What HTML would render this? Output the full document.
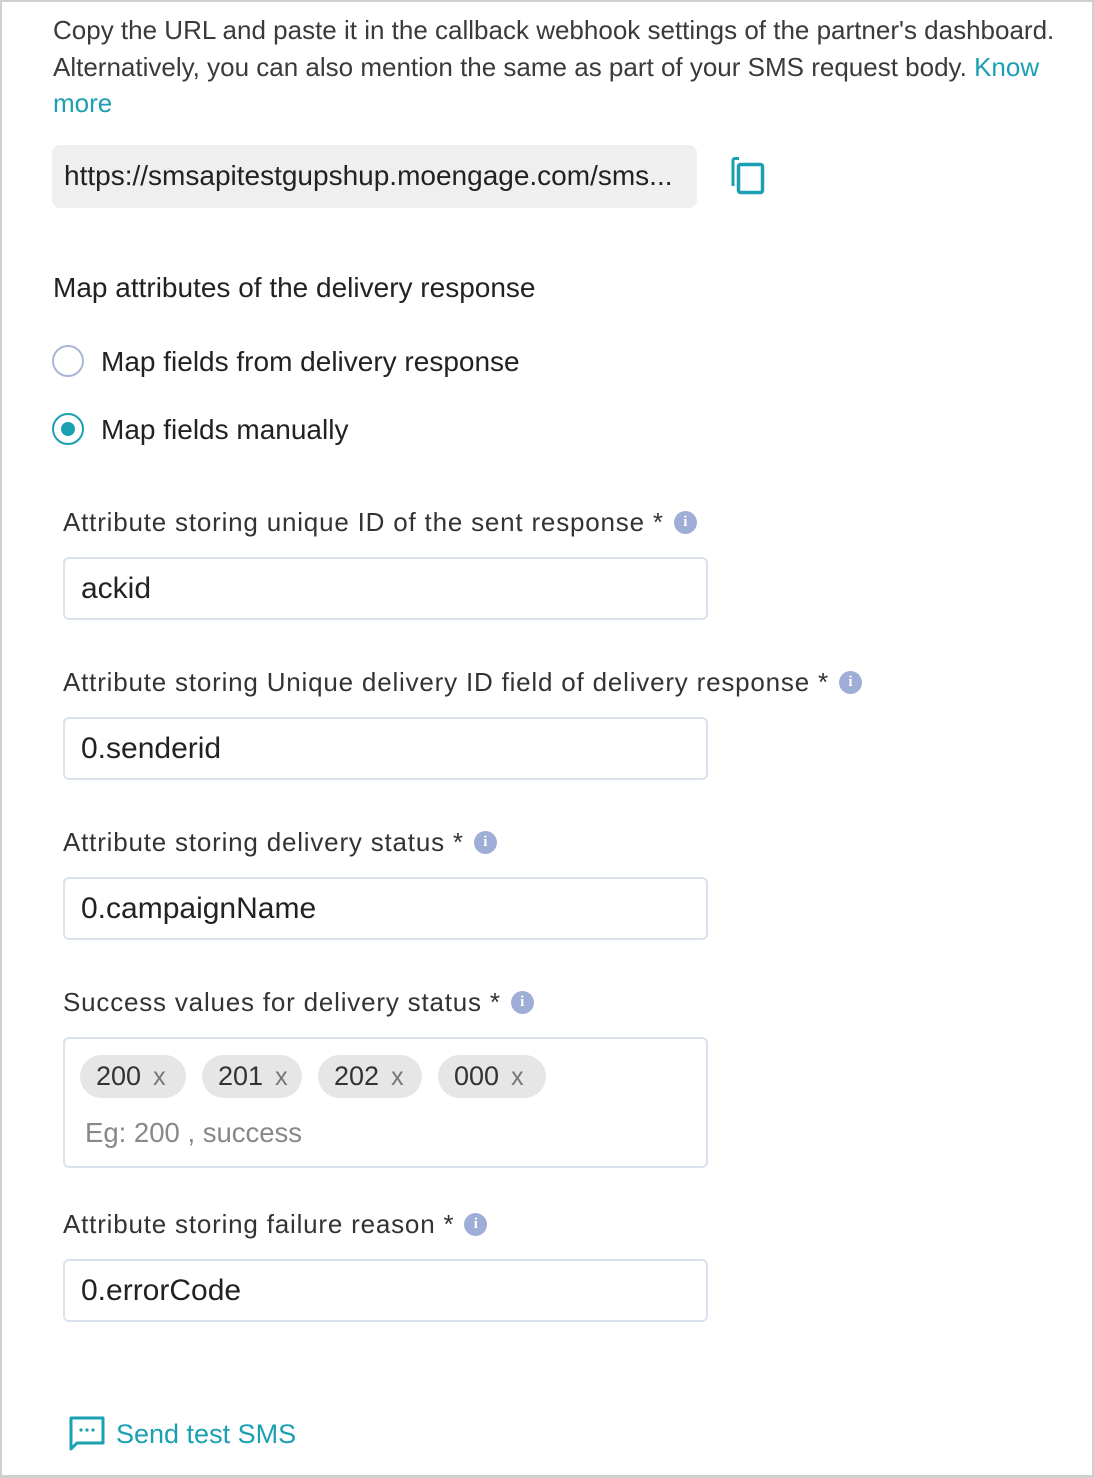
<!DOCTYPE html>
<html><head><meta charset="utf-8"><style>
*{margin:0;padding:0;box-sizing:border-box}
html,body{width:1094px;height:1478px;background:#fff;overflow:hidden}
body{position:relative;font-family:"Liberation Sans",sans-serif;color:#3a3a3a}
.frame{position:absolute;left:0;top:0;width:1094px;height:1478px;border:2px solid #cfcfcf;border-bottom-width:3px}
.t{position:absolute;white-space:nowrap;line-height:36px;font-size:26px}
.lbl{font-size:26px;letter-spacing:0.8px;color:#333}
.teal{color:#1a9fb3}
.box{position:absolute;left:63px;width:645px;border:2px solid #dbe2ee;border-radius:6px;background:#fff}
.inp{height:63px;font-size:30px;color:#222;padding-left:16px;line-height:59px}
.info{display:inline-block;vertical-align:middle;margin-left:10px;margin-top:-4px;width:23px;height:23px;border-radius:50%;background:#9eaed6;color:#fff;font-size:15px;font-weight:bold;text-align:center;line-height:23px;font-family:"Liberation Serif",serif;letter-spacing:0}
.radio{position:absolute;width:32px;height:32px;border-radius:50%;border:2px solid #a9b6d6}
.chip{position:absolute;top:1055px;height:43px;border-radius:22px;background:#e6e6e6;font-size:27px;line-height:43px;color:#333;padding-left:16px}
.chip span{color:#777;margin-left:12px;font-size:25px}
</style></head><body>
<div class="frame"></div>
<div class="t" style="left:53px;top:12px">Copy the URL and paste it in the callback webhook settings of the partner's dashboard.</div>
<div class="t" style="left:53px;top:49px">Alternatively, you can also mention the same as part of your SMS request body. <span class="teal">Know</span></div>
<div class="t teal" style="left:53px;top:85px">more</div>
<div style="position:absolute;left:52px;top:145px;width:645px;height:63px;background:#efefef;border-radius:8px"></div>
<div class="t" style="left:64px;top:158px;font-size:28px;color:#222">https://smsapitestgupshup.moengage.com/sms...</div>
<svg style="position:absolute;left:730px;top:156px" width="36" height="40" viewBox="0 0 36 40"><path d="M9 2.5H5Q3 2.5 3 5V30" fill="none" stroke="#1a9fb3" stroke-width="3"/><rect x="8.5" y="8.5" width="24" height="28" rx="2" fill="none" stroke="#1a9fb3" stroke-width="3.5"/></svg>
<div class="t" style="left:53px;top:270px;font-size:28px;color:#222">Map attributes of the delivery response</div>
<div class="radio" style="left:52px;top:345px"></div>
<div class="t" style="left:101px;top:344px;font-size:28px;color:#222">Map fields from delivery response</div>
<div class="radio" style="left:52px;top:413px;border-color:#1a9fb3"><div style="position:absolute;left:7px;top:7px;width:14px;height:14px;border-radius:50%;background:#1a9fb3"></div></div>
<div class="t" style="left:101px;top:412px;font-size:28px;color:#222">Map fields manually</div>

<div class="t lbl" style="left:63px;top:504px">Attribute storing unique ID of the sent response *<span class="info">i</span></div>
<div class="box inp" style="top:557px">ackid</div>

<div class="t lbl" style="left:63px;top:664px">Attribute storing Unique delivery ID field of delivery response *<span class="info">i</span></div>
<div class="box inp" style="top:717px">0.senderid</div>

<div class="t lbl" style="left:63px;top:824px">Attribute storing delivery status *<span class="info">i</span></div>
<div class="box inp" style="top:877px">0.campaignName</div>

<div class="t lbl" style="left:63px;top:984px">Success values for delivery status *<span class="info">i</span></div>
<div class="box" style="top:1037px;height:131px"></div>
<div class="chip" style="left:80px;width:106px">200<span>x</span></div>
<div class="chip" style="left:202px;width:100px">201<span>x</span></div>
<div class="chip" style="left:318px;width:104px">202<span>x</span></div>
<div class="chip" style="left:438px;width:108px">000<span>x</span></div>
<div class="t" style="left:85px;top:1115px;font-size:27.5px;color:#888">Eg: 200 , success</div>

<div class="t lbl" style="left:63px;top:1206px">Attribute storing failure reason *<span class="info">i</span></div>
<div class="box inp" style="top:1259px">0.errorCode</div>

<svg style="position:absolute;left:69px;top:1416px" width="36" height="36" viewBox="0 0 36 36"><path d="M2 2H34V27H8L2 33Z" fill="none" stroke="#1a9fb3" stroke-width="3" stroke-linejoin="round"/><circle cx="12" cy="14" r="1.6" fill="#1a9fb3"/><circle cx="18" cy="14" r="1.6" fill="#1a9fb3"/><circle cx="24" cy="14" r="1.6" fill="#1a9fb3"/></svg>
<div class="t teal" style="left:116px;top:1416px;font-size:27px">Send test SMS</div>
</body></html>
